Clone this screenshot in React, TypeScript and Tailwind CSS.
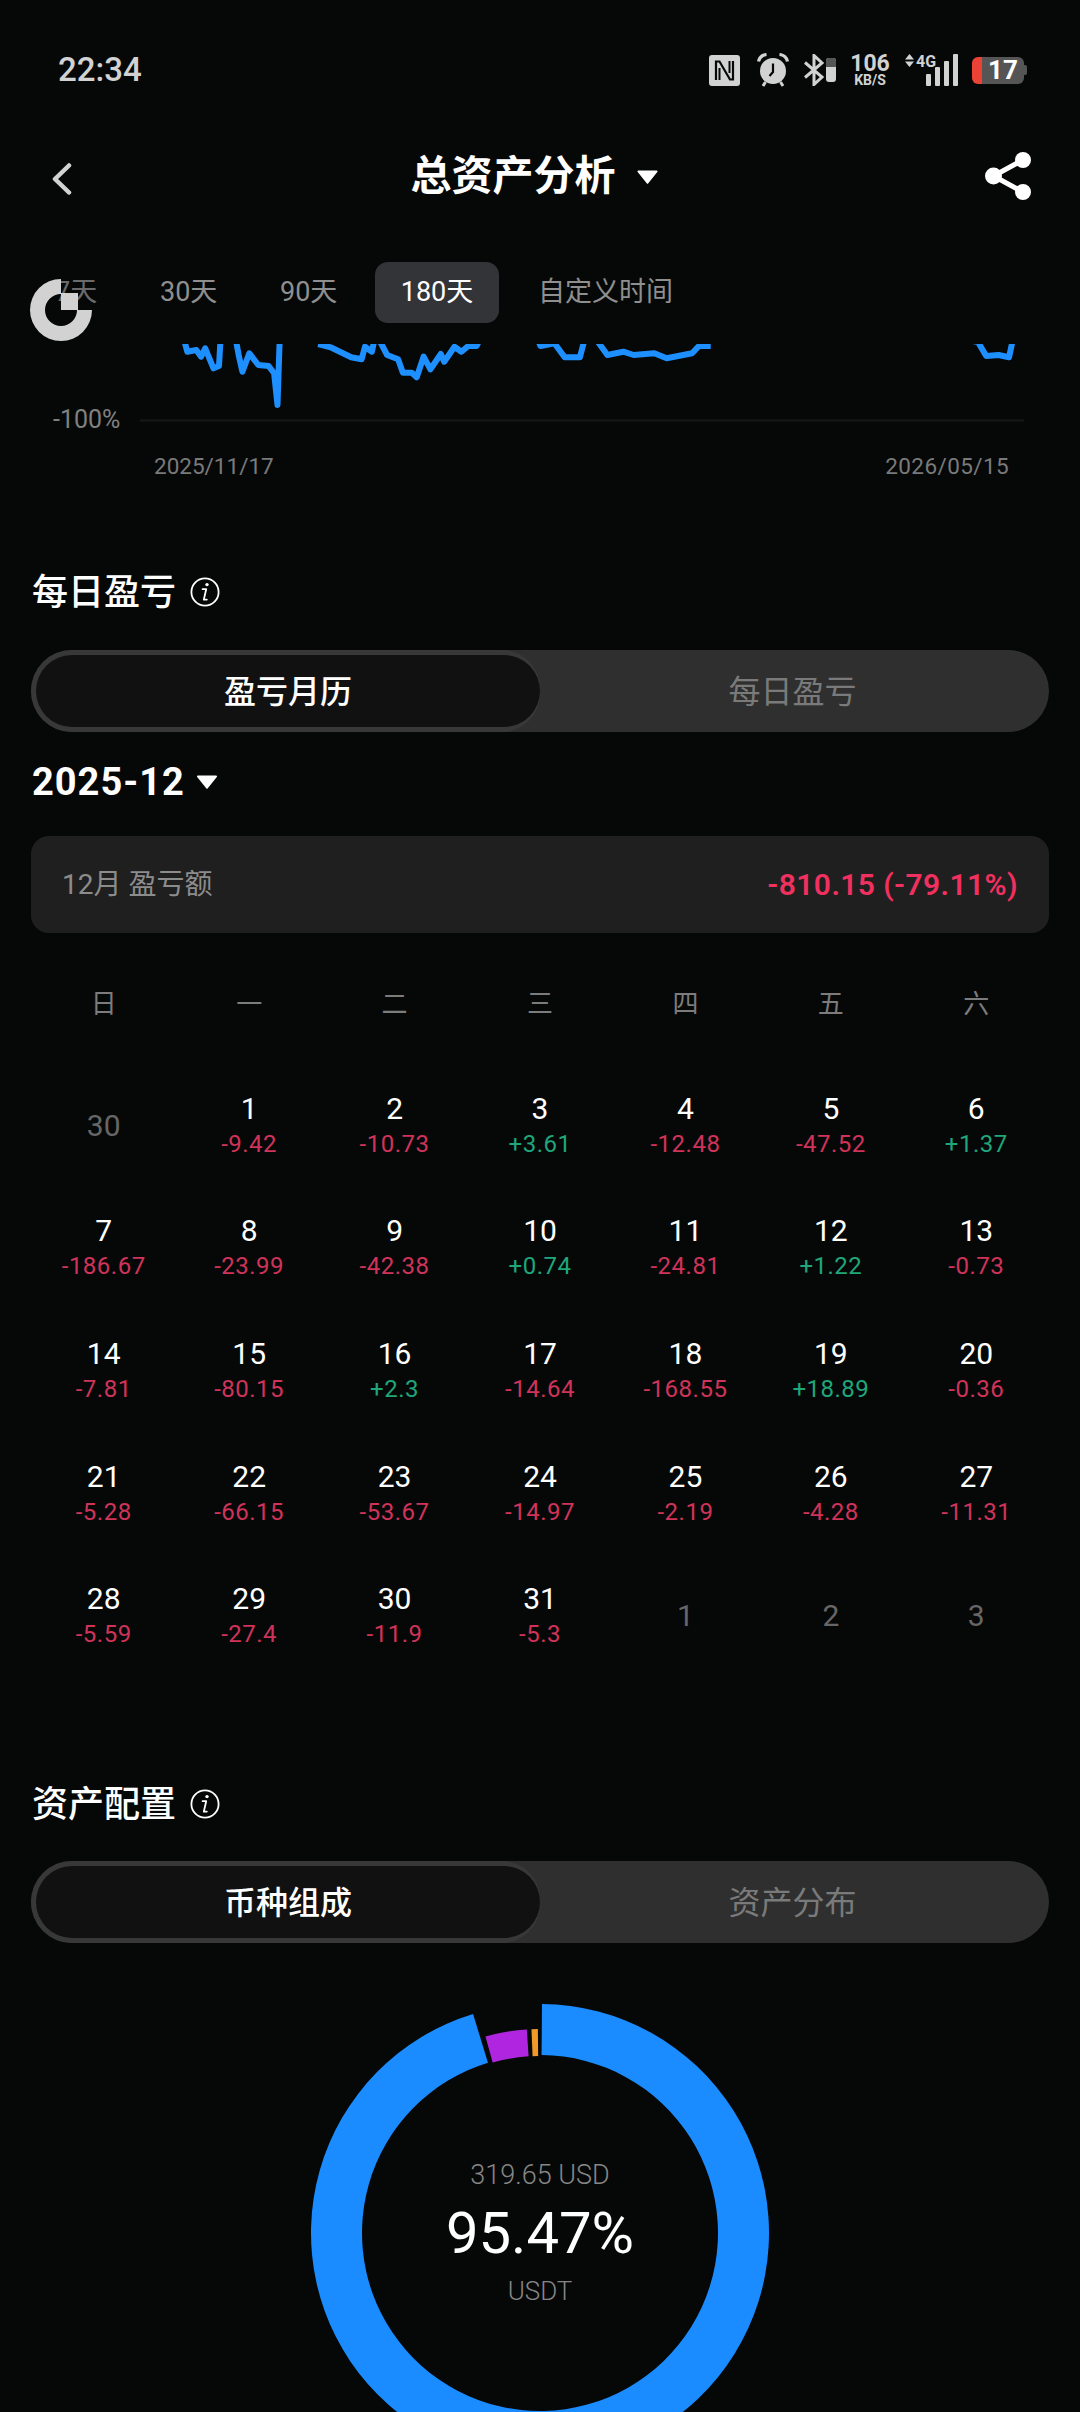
import React from "react";

const font = "[font-family:Roboto,'Noto_Sans_CJK_SC',sans-serif]";

type Day = { d: number; v?: string; muted?: boolean };
const days: Day[] = [
  { d: 30, muted: true }, { d: 1, v: "-9.42" }, { d: 2, v: "-10.73" }, { d: 3, v: "+3.61" }, { d: 4, v: "-12.48" }, { d: 5, v: "-47.52" }, { d: 6, v: "+1.37" },
  { d: 7, v: "-186.67" }, { d: 8, v: "-23.99" }, { d: 9, v: "-42.38" }, { d: 10, v: "+0.74" }, { d: 11, v: "-24.81" }, { d: 12, v: "+1.22" }, { d: 13, v: "-0.73" },
  { d: 14, v: "-7.81" }, { d: 15, v: "-80.15" }, { d: 16, v: "+2.3" }, { d: 17, v: "-14.64" }, { d: 18, v: "-168.55" }, { d: 19, v: "+18.89" }, { d: 20, v: "-0.36" },
  { d: 21, v: "-5.28" }, { d: 22, v: "-66.15" }, { d: 23, v: "-53.67" }, { d: 24, v: "-14.97" }, { d: 25, v: "-2.19" }, { d: 26, v: "-4.28" }, { d: 27, v: "-11.31" },
  { d: 28, v: "-5.59" }, { d: 29, v: "-27.4" }, { d: 30, v: "-11.9" }, { d: 31, v: "-5.3" }, { d: 1, muted: true }, { d: 2, muted: true }, { d: 3, muted: true },
];

// chart fragments, read off a crop that was 1.452x wide and 3x tall, origin (0,240)
const segs: number[][][] = [
  [[268,305],[272,335],[285,330],[292,350],[298,325],[310,385],[318,378],[320,305]],
  [[343,305],[347,350],[352,395],[362,340],[375,375],[390,378],[398,400],[403,495],[406,305]],
  [[462,312],[480,322],[510,352],[525,358],[530,320],[540,335],[543,305]],
  [[552,305],[562,345],[578,358],[585,398],[598,398],[605,412],[615,350],[625,388],[640,342],[645,365],[660,320],[670,335],[680,318],[692,318],[695,305]],
  [[782,305],[785,318],[805,310],[820,352],[842,352],[848,305]],
  [[868,305],[882,345],[905,335],[920,345],[950,340],[968,355],[1005,340],[1015,318],[1032,318]],
  [[1390,302],[1410,302],[1420,306],[1432,348],[1450,345],[1465,352],[1470,305]],
];
const toPts = (s: number[][]) =>
  s.map(([x, y]) => `${(x / 1.452 - 140).toFixed(1)},${(240 + y / 3 - 344).toFixed(1)}`).join(" ");

const polar = (r: number, deg: number) => {
  const a = (deg * Math.PI) / 180;
  return [229 + r * Math.sin(a), 229 - r * Math.cos(a)];
};
const arc = (r0: number, r1: number, a0: number, a1: number) => {
  const large = a1 - a0 > 180 ? 1 : 0;
  const [x0, y0] = polar(r1, a0);
  const [x1, y1] = polar(r1, a1);
  const [x2, y2] = polar(r0, a1);
  const [x3, y3] = polar(r0, a0);
  return `M${x0} ${y0}A${r1} ${r1} 0 ${large} 1 ${x1} ${y1}L${x2} ${y2}A${r0} ${r0} 0 ${large} 0 ${x3} ${y3}Z`;
};

function Caret({ className }: { className: string }) {
  return (
    <svg viewBox="0 0 20 14" className={className} fill="#fff">
      <path d="M1 0.5h18a1 1 0 0 1 .8 1.5l-9 11.3a1 1 0 0 1-1.6 0L.2 2A1 1 0 0 1 1 .5Z" />
    </svg>
  );
}

function Info() {
  return (
    <svg viewBox="0 0 30 30" className="w-[30px] h-[30px]" fill="none" stroke="#fff" strokeWidth="1.8">
      <circle cx="15" cy="15" r="13.6" />
      <circle cx="17" cy="7.6" r="1.7" fill="#fff" stroke="none" />
      <path d="M12.6 12.2h3.6l-2.4 10.4h3" strokeLinecap="round" strokeLinejoin="round" />
    </svg>
  );
}

function Toggle({ a, b }: { a: string; b: string }) {
  return (
    <div className="mt-[36px] mx-[31px] h-[82px] rounded-[41px] bg-[#2f2f2f] flex">
      <div className="w-[509px] h-[82px] rounded-l-[41px] rounded-r-[38px] bg-[#383838] pl-[5px] py-[5px]">
        <div className="h-[72px] pt-[2px] rounded-[36px] bg-[#111111] flex items-center justify-center text-[32px] font-medium text-white">
          {a}
        </div>
      </div>
      <div className="flex-1 pt-[2px] pr-[4px] flex items-center justify-center text-[32px] text-[#7a7a7a]">{b}</div>
    </div>
  );
}

function Heading({ children, mt }: { children: string; mt: string }) {
  return (
    <div className={`${mt} ml-[32px] h-[44px] flex items-center gap-[14px] text-[36px] text-white font-medium`}>
      <span className="pt-[2px]">{children}</span>
      <Info />
    </div>
  );
}

export default function App() {
  return (
    <div className={`relative w-[1080px] h-[2412px] overflow-hidden bg-[#060808] flex flex-col ${font}`}>
      {/* status bar */}
      <div className="h-[140px] shrink-0 flex items-center justify-between pl-[58px] pr-[53px] text-[#d2d2d2]">
        <span className="text-[33px] font-medium">22:34</span>
        <div className="flex items-center h-[34px]">
          <svg viewBox="0 0 31 31" className="w-[31px] h-[31px]">
            <rect width="31" height="31" rx="3" fill="#d2d2d2" />
            <path d="M7 25V6.5h3.5L21 24.5h3V6" fill="none" stroke="#060808" strokeWidth="2.2" />
            <path d="M10.5 13v12M20.5 6v12" fill="none" stroke="#060808" strokeWidth="2" />
          </svg>
          <svg viewBox="0 0 32 34" className="ml-[17px] w-[32px] h-[34px]" fill="none">
            <circle cx="16" cy="18" r="13" fill="#d2d2d2" />
            <path d="M16 10.5V19l-3.5 4" stroke="#060808" strokeWidth="2.2" />
            <path d="M1.5 8.5C2.5 4 5 2 9.5 1.5M30.5 8.5C29.5 4 27 2 22.5 1.5" stroke="#d2d2d2" strokeWidth="3.2" />
            <path d="M8.5 29l-2.5 4M23.5 29l2.5 4" stroke="#d2d2d2" strokeWidth="3" />
          </svg>
          <svg viewBox="0 0 33 32" className="ml-[14px] w-[33px] h-[32px]" fill="none">
            <path d="M2 8.5l17 14.5-8 7.5V1.5l8 7.5L2 23.5" stroke="#d2d2d2" strokeWidth="3" />
            <rect x="23" y="4" width="10" height="24" rx="3" fill="#d2d2d2" />
            <path d="M23 13V7a3 3 0 0 1 3-3h4a3 3 0 0 1 3 3v6Z" fill="#555" />
          </svg>
          <div className="ml-[12px] w-[44px] flex flex-col items-center font-bold">
            <span className="text-[23px] leading-[20px]">106</span>
            <span className="text-[14px] leading-[13px]">KB/S</span>
          </div>
          <svg viewBox="0 0 54 32" className="ml-[13px] w-[54px] h-[32px]">
            <path d="M0 5.5L4.5 0 9 5.5ZM0 7.5h9L4.5 13Z" fill="#d2d2d2" />
            <rect x="21" y="20" width="5" height="12" rx="1" fill="#d2d2d2" />
            <rect x="30" y="13" width="5" height="19" rx="1" fill="#d2d2d2" />
            <rect x="39" y="7" width="5" height="25" rx="1" fill="#d2d2d2" />
            <rect x="48" y="0" width="5" height="32" rx="1" fill="#d2d2d2" />
          </svg>
          <span className="absolute left-[916px] top-[53px] text-[16px] leading-[18px] font-bold">4G</span>
          <div className="ml-[13px] relative w-[55px] h-[27px] flex">
            <div className="w-[10px] h-full bg-[#ea4335] rounded-l-[6px]" />
            <div className="w-[42px] h-full bg-[#555555] rounded-r-[6px] flex items-center justify-center text-white text-[26px] font-bold">17</div>
            <div className="w-[3px] h-[10px] self-center bg-[#555555] rounded-r-[2px]" />
          </div>
        </div>
      </div>

      {/* header */}
      <div className="relative h-[70px] shrink-0 flex items-center justify-center text-white">
        <svg viewBox="0 0 20 32" className="absolute left-[52px] top-[23px] w-[20px] h-[32px]" fill="none" stroke="#d2d2d2" strokeWidth="4.5" strokeLinecap="round" strokeLinejoin="round">
          <path d="M17 2.5 3 16l14 13.5" />
        </svg>
        <span className="text-[41px] font-semibold leading-[70px] pt-[2px] relative left-[-27px]">总资产分析</span>
        <Caret className="absolute left-[637px] top-[30px] w-[21px] h-[14px]" />
        <svg viewBox="0 0 48 50" className="absolute left-[984px] top-[11px] w-[48px] h-[50px]" fill="#fff" stroke="none">
          <path d="M39 9 9.5 25 39 41" fill="none" stroke="#fff" strokeWidth="5" />
          <circle cx="39" cy="9" r="8" />
          <circle cx="9.5" cy="25" r="8.5" />
          <circle cx="39" cy="41" r="8" />
        </svg>
      </div>

      {/* range tabs */}
      <div className="mt-[51px] h-[61px] pt-[1px] shrink-0 relative flex items-center text-[27px] text-[#8f8f8f]">
        <span className="ml-[55px] w-[105px] text-[#6a6a6a]">7天</span>
        <span className="w-[120px]">30天</span>
        <span className="w-[95px]">90天</span>
        <span className="w-[124px] h-[61px] rounded-[13px] bg-[#333438] text-white flex items-center justify-center">180天</span>
        <span className="ml-[39px]">自定义时间</span>
      </div>

      {/* chart */}
      <div className="mt-[22px] h-[90px] shrink-0 flex">
        <div className="w-[140px] pt-[61px] pl-[53px] text-[25px] leading-[30px] text-[#808080]">-100%</div>
        <svg width="940" height="90" viewBox="0 0 940 90" fill="none" className="block">
          <line x1="0" y1="76.5" x2="884" y2="76.5" stroke="#161818" strokeWidth="2" />
          {segs.map((s, i) => (
            <polyline key={i} points={toPts(s)} stroke="#1e8fff" strokeWidth="6" strokeLinejoin="round" />
          ))}
        </svg>
      </div>
      <div className="mt-[17px] h-[30px] shrink-0 flex justify-between pl-[154px] pr-[71px] text-[22.5px] leading-[30px] text-[#7a7a7a]">
        <span>2025/11/17</span>
        <span className="tracking-[0.4px]">2026/05/15</span>
      </div>

      <Heading mt="mt-[89px]">每日盈亏</Heading>
      <Toggle a="盈亏月历" b="每日盈亏" />

      <div className="mt-[28px] ml-[32px] h-[44px] flex items-center gap-[12px] text-white text-[38px] font-bold tracking-[1px]">
        2025-12
        <Caret className="w-[20px] h-[14px]" />
      </div>

      <div className="mt-[32px] mx-[31px] h-[97px] shrink-0 rounded-[18px] bg-[#1f1f1f] flex items-center justify-between px-[31px]">
        <span className="text-[28px] text-[#8c8c8c] pt-[1px]">12月 盈亏额</span>
        <span className="text-[30px] font-semibold tracking-[0.4px] text-[#f0305f]">-810.15 (-79.11%)</span>
      </div>

      <div className="mt-[51px] mx-[31px] h-[40px] shrink-0 grid grid-cols-7 items-center text-center text-[26px] text-[#7c7c7c]">
        {["日", "一", "二", "三", "四", "五", "六"].map((w) => (
          <span key={w}>{w}</span>
        ))}
      </div>

      <div className="mt-[41px] mx-[31px] grid grid-cols-7 auto-rows-[122.6px] shrink-0">
        {days.map((c, i) =>
          c.muted ? (
            <div key={i} className="flex items-center justify-center pb-[2px] text-[30px] text-[#666666]">{c.d}</div>
          ) : (
            <div key={i} className="flex flex-col items-center justify-center">
              <span className="text-[30px] leading-[35px] text-white">{c.d}</span>
              <span className={`text-[24px] leading-[36px] tracking-[0.5px] ${c.v!.startsWith("+") ? "text-[#1fa67a]" : "text-[#d0335a]"}`}>{c.v}</span>
            </div>
          ),
        )}
      </div>

      <Heading mt="mt-[104px]">资产配置</Heading>
      <div className="-mt-[1px]">
        <Toggle a="币种组成" b="资产分布" />
      </div>

      {/* donut */}
      <div className="mt-[61px] mx-auto relative w-[458px] h-[458px] shrink-0">
        <svg viewBox="0 0 458 458" className="w-[458px] h-[458px]">
          <path d={arc(178, 229, 0.5, 343)} fill="#1a8cff" />
          <path d={arc(177, 204, 344.5, 356.3)} fill="#b026e0" />
          <path d={arc(177, 204, 357.6, 359.4)} fill="#f09a2a" />
        </svg>
        <div className="absolute inset-0 flex flex-col items-center justify-center">
          <span className="h-[58px] leading-[58px] text-[27px] font-light text-[#868686]">319.65 USD</span>
          <span className="h-[58px] leading-[58px] text-[58px] text-white">95.47%</span>
          <span className="h-[58px] leading-[58px] text-[26px] font-light text-[#868686]">USDT</span>
        </div>
      </div>

      {/* loading mark lying over the tabs */}
      <svg viewBox="0 0 62 62" className="absolute left-[30px] top-[279px] w-[62px] h-[62px]" fill="#d2d2d2">
        <path d="M31 0A31 31 0 1 0 62 31H47A16 16 0 1 1 31 15Z" />
        <rect x="31" y="14" width="17" height="17" />
      </svg>
    </div>
  );
}
